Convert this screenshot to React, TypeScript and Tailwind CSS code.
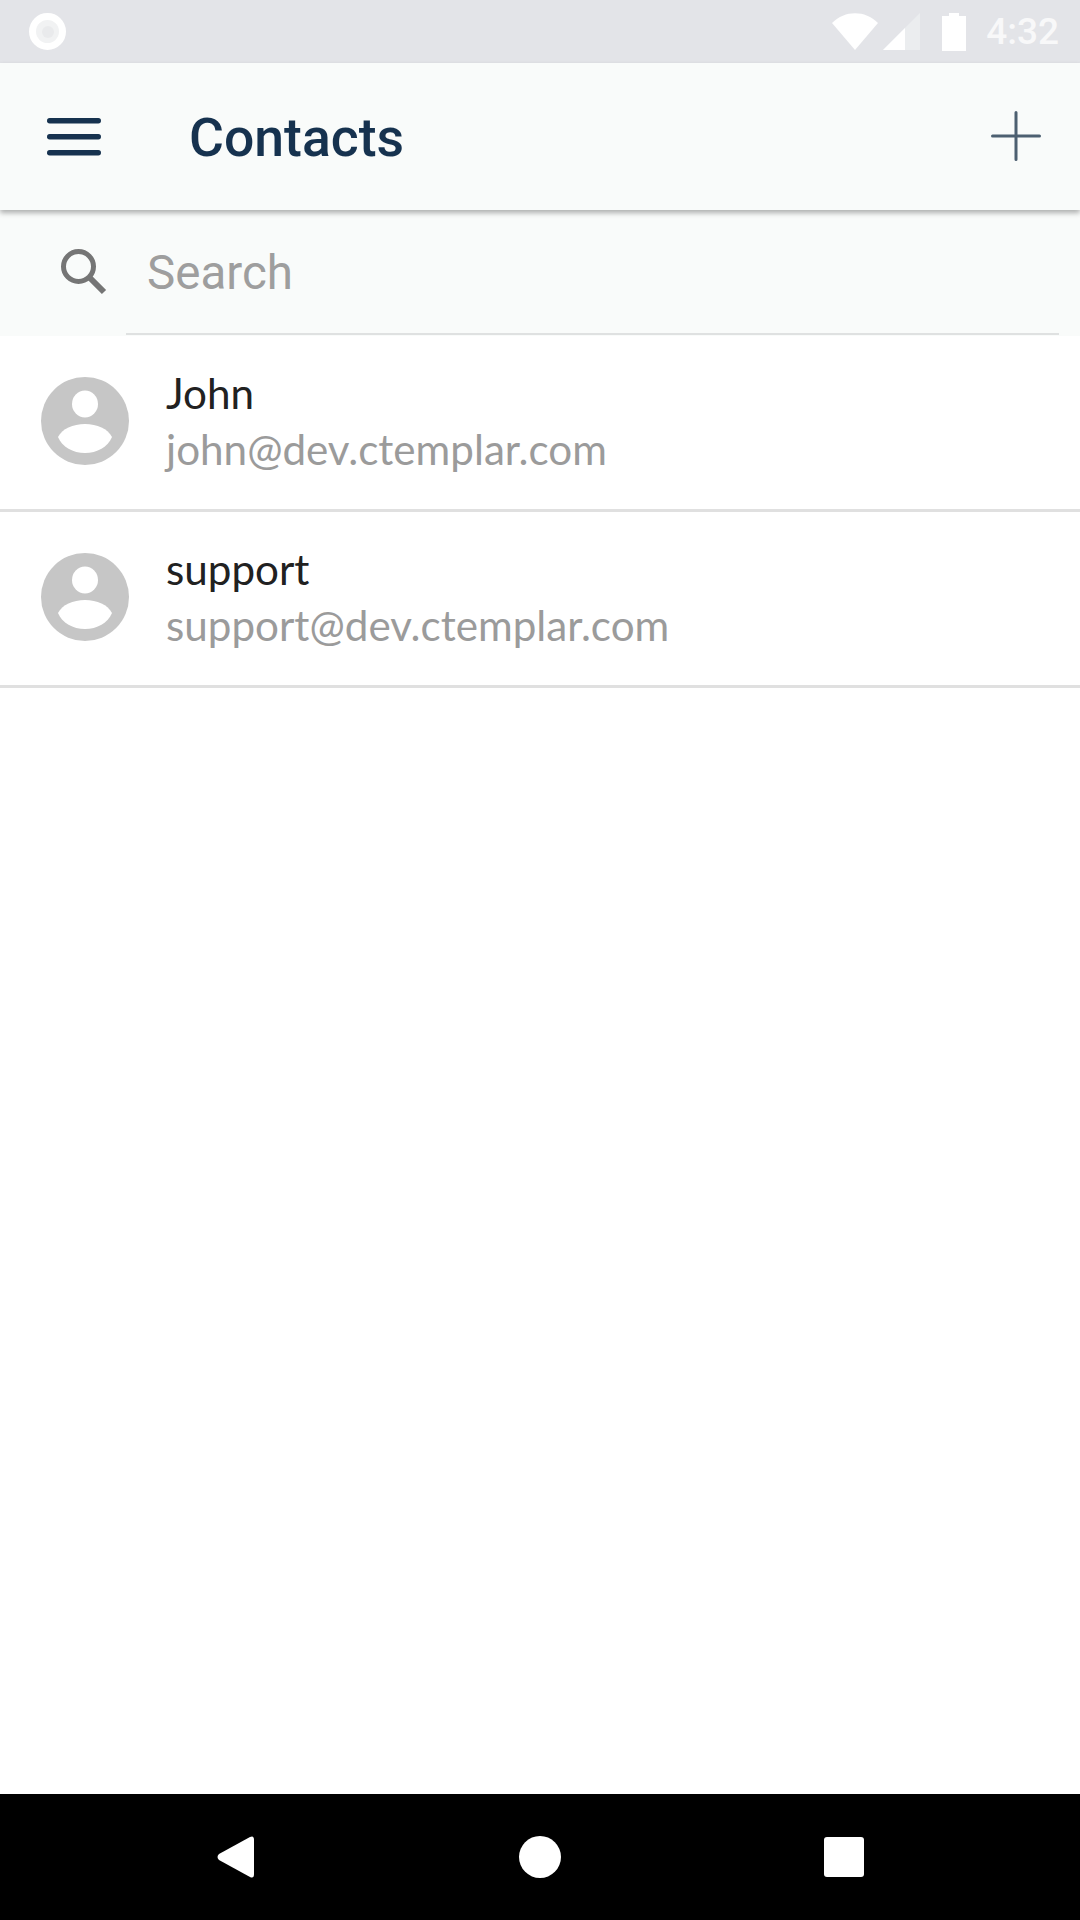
const Avatar = () => (
  <svg width="88" height="88" viewBox="0 0 88 88" className="shrink-0">
    <circle cx="44" cy="44" r="44" fill="#c6c6c6" />
    <ellipse cx="44" cy="27" rx="13" ry="13.5" fill="#ffffff" />
    <path d="M17 60 C21 52 32 47 44 47 C56 47 67 52 71 60 C67 70 56 76 44 76 C32 76 21 70 17 60 Z" fill="#ffffff" />
  </svg>
);

const Row = ({ name, email }: { name: string; email: string }) => (
  <div className="flex h-[176px] w-full items-center border-b-[3px] border-[#e0e0e0] pb-[4px] pl-[41px]">
    <Avatar />
    <div className="ml-[37px] flex flex-col font-['Lato',sans-serif]">
      <span className="text-[42.2px] leading-[56px] text-[#212121]">{name}</span>
      <span className="text-[42.2px] leading-[56px] text-[#9b9b9b]">{email}</span>
    </div>
  </div>
);

export default function App() {
  return (
    <div className="flex h-[1920px] w-[1080px] flex-col overflow-hidden bg-white font-['Roboto',sans-serif]">
      <div className="flex h-[63px] shrink-0 items-center justify-between bg-[#e3e4e8] pl-[29px] pr-[21px]">
        <div className="flex h-[37px] w-[37px] items-center justify-center rounded-full border-[7px] border-white bg-[#f1f2f3]">
          <div className="h-[12px] w-[12px] rounded-full bg-[#e9eaec]" />
        </div>
        <div className="flex items-center">
          <svg width="46" height="37" viewBox="0 0 46 37" className="mr-[5px]">
            <path d="M0 10 C13 -3 33 -3 46 10 L23 37 Z" fill="#ffffff" />
          </svg>
          <svg width="37" height="37" viewBox="0 0 37 37" className="mr-[22px]">
            <path d="M37 0 V37 H0 Z" fill="#ebedef" />
            <path d="M22 15 V37 H0 Z" fill="#ffffff" />
          </svg>
          <svg width="24" height="38" viewBox="0 0 24 38" className="mr-[20px]">
            <path d="M7 0 H17 V3 H24 V38 H0 V3 H7 Z" fill="#ffffff" />
          </svg>
          <span className="text-[37px] font-medium leading-[40px] text-[#f8f8f9]">4:32</span>
        </div>
      </div>

      <header className="z-10 flex h-[147px] shrink-0 items-center bg-[#f9fbfa] pl-[47px] pr-[39px] shadow-[0_3px_5px_rgba(0,0,0,0.3)]">
        <svg width="54" height="38" viewBox="0 0 54 38" className="shrink-0">
          <rect x="0" y="0" width="54" height="5.5" rx="2.7" fill="#16324f" />
          <rect x="0" y="16" width="54" height="5.5" rx="2.7" fill="#16324f" />
          <rect x="0" y="32" width="54" height="5.5" rx="2.7" fill="#16324f" />
        </svg>
        <h1 className="ml-[88px] mt-[3px] text-[53.5px] font-medium leading-none text-[#16324f]">Contacts</h1>
        <svg width="50" height="50" viewBox="0 0 50 50" className="ml-auto mb-[1px]">
          <path d="M25 1.5 V48.5 M1.5 25 H48.5" stroke="#4d6071" strokeWidth="3" strokeLinecap="round" />
        </svg>
      </header>

      <div className="relative flex h-[126px] shrink-0 items-center bg-[#f9fbfa] pl-[61px]">
        <svg width="46" height="46" viewBox="0 0 46 46" className="mb-[2px] shrink-0">
          <circle cx="17.5" cy="17.5" r="15" fill="none" stroke="#757575" strokeWidth="5" />
          <path d="M28 28 L43 43" stroke="#757575" strokeWidth="6" />
        </svg>
        <span className="ml-[40px] mt-[1px] text-[47.5px] leading-none text-[#9e9e9e]">Search</span>
        <div className="absolute bottom-[1px] left-[126px] right-[21px] h-[2px] bg-[#dfe1e1]" />
      </div>

      <Row name="John" email="john@dev.ctemplar.com" />
      <Row name="support" email="support@dev.ctemplar.com" />

      <div className="flex-1" />

      <nav className="relative flex h-[126px] shrink-0 items-center bg-black">
        <svg width="37" height="42" viewBox="0 0 37 42" className="ml-[217px] shrink-0">
          <path d="M33 1 Q37 -1 37 4 V38 Q37 43 33 41 L2 24 Q-1 21 2 18 Z" fill="#ffffff" />
        </svg>
        <div className="ml-[265px] h-[42px] w-[42px] shrink-0 rounded-full bg-white" />
        <div className="ml-[263px] h-[40px] w-[40px] shrink-0 rounded-[3px] bg-white" />
      </nav>
    </div>
  );
}
